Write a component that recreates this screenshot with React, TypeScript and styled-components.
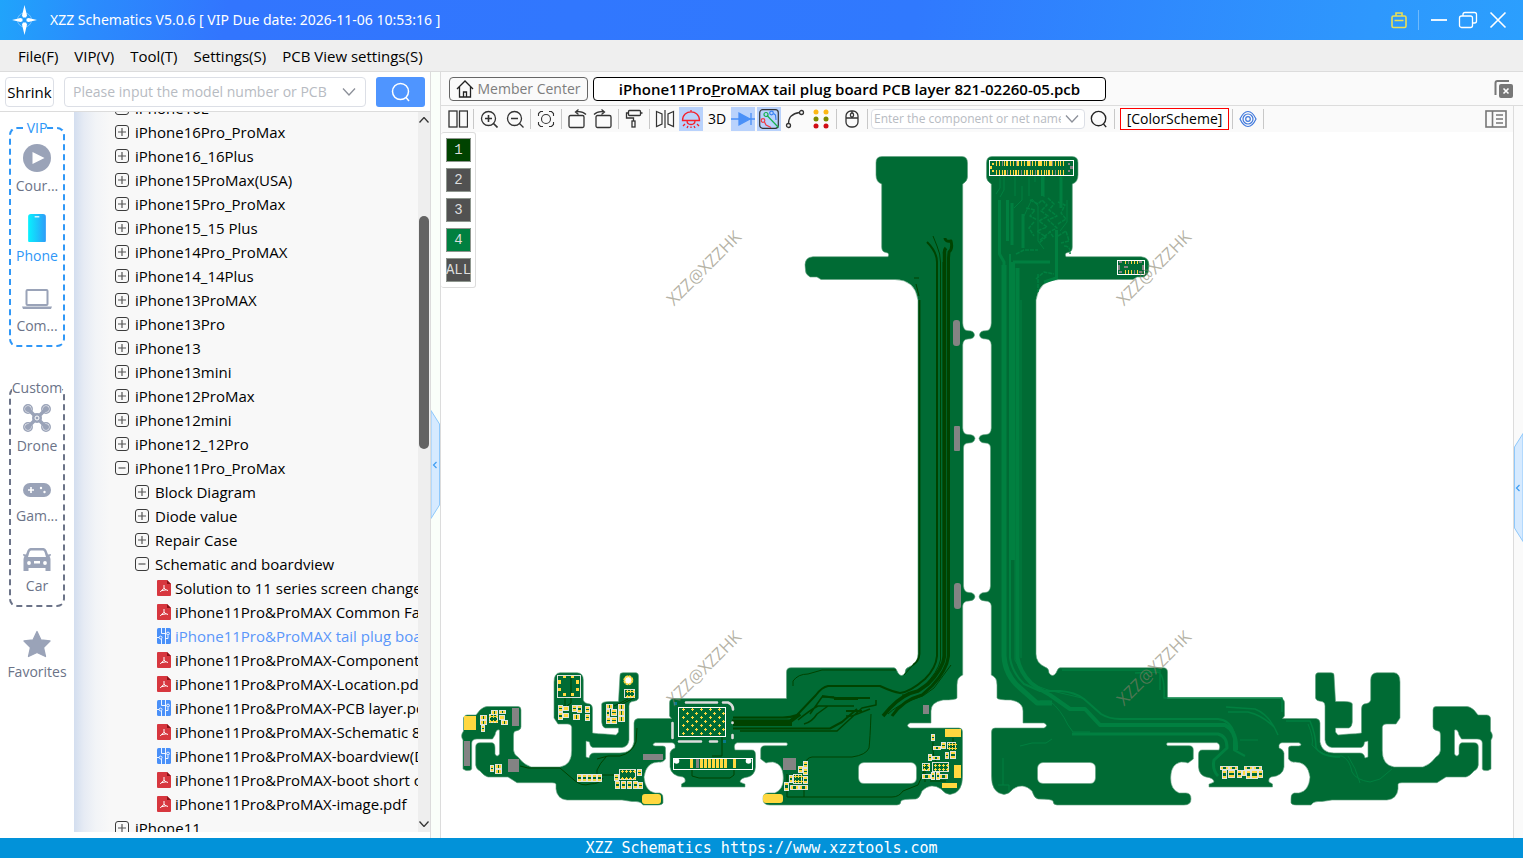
import React from "react";
import styled, { createGlobalStyle } from "styled-components";

const Global = createGlobalStyle`
  *, *::before, *::after { box-sizing: border-box; }
  body { margin: 0; background: #fff; color: #000; font: 15px/20px "Open Sans", "Noto Sans", sans-serif; }
  button, input { font: inherit; color: inherit; }
  button { background: none; border: 0; padding: 0; }
  svg { display: block; flex: none; }
`;

const Page = styled.div`
  display: flex;
  flex-direction: column;
  height: 100vh;
  overflow: hidden;
`;

const TitleBar = styled.header`
  display: flex;
  align-items: center;
  flex: none;
  height: 40px;
  padding: 0 16px 0 12px;
  color: #fff;
  background: linear-gradient(100deg, #20a4fb 0%, #2a8cfd 6%, #3275fe 15%, #3079fe 60%, #2e98fd 90%, #2b9ffe 100%);
`;

const AppTitle = styled.h1`
  flex: 1;
  margin: 0 0 0 13px;
  font-family: "Noto Sans", "Open Sans", sans-serif;
  font-size: 14px;
  font-weight: 400;
  line-height: 20px;
`;

const WindowButtons = styled.div`
  display: flex;
  align-items: center;
  gap: 11px;
`;

const WindowDivider = styled.span`
  width: 1px;
  height: 20px;
  margin-right: 1px;
  background: #6fbafc;
`;

const MenuBar = styled.nav`
  display: flex;
  align-items: center;
  flex: none;
  gap: 16px;
  height: 32px;
  padding: 0 18px;
  background: #efefef;
  border-bottom: 1px solid #dcdcdc;
`;

const MenuItem = styled.button`
  font-size: 15px;
`;

const Workspace = styled.div`
  display: flex;
  flex: 1;
  min-height: 0;
`;

const LeftPane = styled.aside`
  display: flex;
  flex-direction: column;
  flex: none;
  width: 431px;
  border-right: 1px solid #dcdcdc;
`;

const SearchRow = styled.form`
  display: flex;
  align-items: center;
  flex: none;
  height: 40px;
  padding: 0 5px;
  border-bottom: 1px solid #dcdcdc;
`;

const ShrinkButton = styled.button`
  width: 49px;
  height: 30px;
  border: 1px solid #dcdfe6;
  border-radius: 4px;
  font-size: 15px;
`;

const Combo = styled.label<{ $width: number; $height: number; $size: number }>`
  display: flex;
  align-items: center;
  gap: 4px;
  width: ${(p) => p.$width}px;
  height: ${(p) => p.$height}px;
  padding: 0 ${(p) => (p.$size > 13 ? 9 : 5)}px 0 ${(p) => (p.$size > 13 ? 8 : 2)}px;
  border: 1px solid #dcdfe6;
  border-radius: 4px;
  background: #fff;
  color: #a0a4ab;
  font-size: ${(p) => p.$size}px;
`;

const ComboInput = styled.input`
  flex: 1;
  min-width: 0;
  padding: 0;
  border: 0;
  outline: 0;
  background: none;
  &::placeholder { color: #b7bbc2; opacity: 1; }
`;

const SearchButton = styled.button`
  display: grid;
  place-items: center;
  width: 49px;
  height: 30px;
  margin-left: 10px;
  border-radius: 3px;
  background: #4f95ff;
`;

const ComboSlot = styled.div`
  margin-left: 10px;
`;

const Browser = styled.div`
  display: flex;
  flex: 1;
  min-height: 0;
  padding-bottom: 6px;
`;

const Rail = styled.nav`
  display: flex;
  flex-direction: column;
  flex: none;
  width: 74px;
  padding: 6px 9px 0;
`;

const RailGroup = styled.fieldset<{ $tone: string }>`
  display: flex;
  flex-direction: column;
  gap: 18px;
  min-width: 0;
  margin: 0 0 31px;
  padding: 6px 0 9px;
  border: 2px dashed ${(p) => p.$tone};
  border-radius: 8px;
  color: ${(p) => p.$tone};
  & + & { margin-bottom: 23px; }
`;

const RailLegend = styled.legend`
  margin: 0 auto;
  padding: 0;
  font-size: 14px;
  line-height: 20px;
`;

const RailItem = styled.button<{ $active?: boolean }>`
  display: flex;
  flex-direction: column;
  align-items: center;
  gap: 4px;
  height: 52px;
  margin: 0 -8px;
  color: ${(p) => (p.$active ? "#2f97f7" : "#6b7388")};
  font-size: 14px;
  line-height: 20px;
`;

const TreeArea = styled.div`
  flex: 1;
  min-width: 0;
  overflow: hidden;
  background: linear-gradient(90deg, #d3deef 0, #e6ebf4 10px, #f2f4f7 22px, #f8f8f8 36px);
`;

const Tree = styled.ul`
  margin: -16px 0 0;
  padding: 0 0 0 41px;
  list-style: none;
`;

const TreeRow = styled.li<{ $depth: number; $active?: boolean }>`
  display: flex;
  align-items: center;
  height: 24px;
  padding-left: ${(p) => p.$depth * 20 + (p.$depth === 2 ? 2 : 0)}px;
  gap: ${(p) => (p.$depth === 2 ? 4 : 6)}px;
  color: ${(p) => (p.$active ? "#5a96fa" : "#000")};
  font-size: 15px;
  white-space: nowrap;
`;

const Scrollbar = styled.div`
  display: flex;
  flex-direction: column;
  align-items: center;
  flex: none;
  width: 12px;
  background: #eee;
`;

const ScrollStep = styled.button`
  display: grid;
  place-items: center;
  width: 12px;
  height: 16px;
`;

const ScrollTrack = styled.div`
  flex: 1;
  padding-top: 88px;
`;

const ScrollThumb = styled.div`
  width: 10px;
  height: 233px;
  border-radius: 5px;
  background: #636363;
`;

const Splitter = styled.div<{ $shift: number; $tone: string }>`
  display: flex;
  align-items: center;
  flex: none;
  width: 9px;
  padding-top: ${(p) => p.$shift}px;
  background: ${(p) => p.$tone};
`;

const RightPane = styled.main`
  display: flex;
  flex-direction: column;
  flex: 1;
  min-width: 0;
  border-left: 1px solid #dcdcdc;
`;

const TabBar = styled.div`
  display: flex;
  align-items: center;
  flex: none;
  gap: 5px;
  height: 34px;
  padding: 0 10px 0 8px;
  background: #fafafa;
  border-bottom: 1px solid #dcdcdc;
`;

const Tab = styled.button<{ $current?: boolean }>`
  display: flex;
  align-items: center;
  justify-content: center;
  gap: 3px;
  width: ${(p) => (p.$current ? 513 : 139)}px;
  height: 24px;
  border: 1px solid ${(p) => (p.$current ? "#000" : "#666")};
  border-radius: 4px;
  background: ${(p) => (p.$current ? "#fff" : "#fafafa")};
  color: ${(p) => (p.$current ? "#000" : "#7d7d7d")};
  font-size: ${(p) => (p.$current ? 15 : 14)}px;
  font-weight: ${(p) => (p.$current ? 600 : 400)};
  white-space: nowrap;
`;

const Spacer = styled.span`
  flex: 1;
`;

const Viewer = styled.div`
  display: flex;
  flex: 1;
  min-height: 0;
`;

const BoardColumn = styled.section`
  display: flex;
  flex-direction: column;
  flex: 1;
  min-width: 0;
  border-right: 1px solid #dcdcdc;
`;

const ToolBar = styled.div`
  display: flex;
  align-items: center;
  flex: none;
  gap: 2px;
  height: 26px;
  padding: 0 5px;
  background: #fafafa;
`;

const Tool = styled.button<{ $on?: boolean }>`
  display: grid;
  place-items: center;
  flex: none;
  width: 24px;
  height: 24px;
  background: ${(p) => (p.$on ? "#b9d2fc" : "none")};
  font-size: 14px;
`;

const ToolDivider = styled.span`
  width: 1px;
  height: 20px;
  margin: 0 1px;
  background: #c8c8c8;
`;

const SchemeButton = styled.button`
  width: 109px;
  height: 22px;
  margin: 0 0 0 2px;
  border: 1px solid #f00;
  background: #fff;
  font-size: 14px;
  line-height: 18px;
`;

const Canvas = styled.div`
  position: relative;
  flex: 1;
  min-height: 0;
`;

const Board = styled.svg`
  width: 100%;
  height: 100%;
`;

const LayerPalette = styled.div`
  position: absolute;
  top: 0;
  left: 0;
  display: flex;
  flex-direction: column;
  gap: 6px;
  width: 35px;
  padding: 5px;
  border: 1px solid #dcdcdc;
  border-left: 0;
  border-radius: 3px;
  background: #fff;
`;

const LayerButton = styled.button<{ $fill: string }>`
  display: flex;
  align-items: center;
  justify-content: center;
  width: 25px;
  height: 24px;
  box-shadow: inset 0 0 0 1px #8e968e;
  border-radius: 1px;
  background: ${(p) => p.$fill};
  color: #ddd;
  font: 14px/20px "Liberation Mono", monospace;
`;

const StatusBar = styled.footer`
  flex: none;
  height: 20px;
  background: #0292d9;
  color: #fff;
  font: 15px/20px "DejaVu Sans Mono", monospace;
  text-align: center;
`;

const StatusLink = styled.a`
  color: inherit;
  text-decoration: none;
`;

type IconProps = { w?: number; h?: number; box?: string; color?: string; stroke?: number; children: React.ReactNode };

const Icon = ({ w = 20, h = 20, box, color = "#333", stroke = 1.3, children }: IconProps) => (
  <svg width={w} height={h} viewBox={box ?? `0 0 ${w} ${h}`} fill="none" stroke={color} strokeWidth={stroke} aria-hidden="true">
    {children}
  </svg>
);

const Chevron = () => (
  <Icon w={14} h={10} color="#8c9099"><path d="M1 1.5 7 8l6-6.5" /></Icon>
);

const Expander = ({ open }: { open?: boolean }) => (
  <Icon w={14} h={14} color="#3b3b3b" stroke={1}>
    <rect x=".5" y=".5" width="13" height="13" rx="2.5" />
    <path d={open ? "M3.5 7h7" : "M3 7h8M7 3v8"} stroke="#555" strokeWidth="1.2" />
  </Icon>
);

const PdfIcon = () => (
  <Icon w={14} h={16} color="#fff" stroke={1}>
    <path d="M1 0h9l4 4v11a1 1 0 0 1-1 1H1a1 1 0 0 1-1-1V1a1 1 0 0 1 1-1Z" fill="#d7373f" stroke="none" />
    <path d="M10 0v4h4Z" fill="#8c1218" stroke="none" />
    <path d="M7 5v3.200L3.200 12M7 8.200q1.500 1.800 4 2.300M4.600 10.600 9 9.800" />
  </Icon>
);

const PcbIcon = () => (
  <Icon w={14} h={16} color="#fff" stroke={0.9}>
    <rect width="14" height="16" rx="1.5" fill="#4a90f8" stroke="none" />
    <path d="M4.500 0v5.500H8.500M8.500 0V16M4.500 16V11M0 9.500h2M8.500 10.500H11V7.500" />
    <circle cx="11" cy="5.500" r="1.400" fill="#4a90f8" /><circle cx="3.600" cy="9.500" r="1.400" fill="#4a90f8" />
  </Icon>
);

type Node = { label: string; depth?: number; kind?: "open" | "pdf" | "pcb"; active?: boolean };

const nodes: Node[] = [
  { label: "iPhone16E" },
  { label: "iPhone16Pro_ProMax" },
  { label: "iPhone16_16Plus" },
  { label: "iPhone15ProMax(USA)" },
  { label: "iPhone15Pro_ProMax" },
  { label: "iPhone15_15 Plus" },
  { label: "iPhone14Pro_ProMAX" },
  { label: "iPhone14_14Plus" },
  { label: "iPhone13ProMAX" },
  { label: "iPhone13Pro" },
  { label: "iPhone13" },
  { label: "iPhone13mini" },
  { label: "iPhone12ProMax" },
  { label: "iPhone12mini" },
  { label: "iPhone12_12Pro" },
  { label: "iPhone11Pro_ProMax", kind: "open" },
  { label: "Block Diagram", depth: 1 },
  { label: "Diode value", depth: 1 },
  { label: "Repair Case", depth: 1 },
  { label: "Schematic and boardview", depth: 1, kind: "open" },
  { label: "Solution to 11 series screen change problem.pdf", depth: 2, kind: "pdf" },
  { label: "iPhone11Pro&ProMAX Common Faults.pdf", depth: 2, kind: "pdf" },
  { label: "iPhone11Pro&ProMAX tail plug board PCB layer", depth: 2, kind: "pcb", active: true },
  { label: "iPhone11Pro&ProMAX-Component value.pdf", depth: 2, kind: "pdf" },
  { label: "iPhone11Pro&ProMAX-Location.pdf", depth: 2, kind: "pdf" },
  { label: "iPhone11Pro&ProMAX-PCB layer.pcb", depth: 2, kind: "pcb" },
  { label: "iPhone11Pro&ProMAX-Schematic 820.pdf", depth: 2, kind: "pdf" },
  { label: "iPhone11Pro&ProMAX-boardview(Diode).pcb", depth: 2, kind: "pcb" },
  { label: "iPhone11Pro&ProMAX-boot short circuit.pdf", depth: 2, kind: "pdf" },
  { label: "iPhone11Pro&ProMAX-image.pdf", depth: 2, kind: "pdf" },
  { label: "iPhone11" },
];

const muted = "#9aa3b8";

const CourseIcon = () => (
  <Icon w={28} h={28}><circle cx="14" cy="14" r="14" fill={muted} stroke="none" /><path d="M9.500 8v12l12-6Z" fill="#fff" stroke="none" /></Icon>
);
const PhoneIcon = () => (
  <Icon w={28} h={28} box="0 -1 28 30">
    <defs><linearGradient id="phone"><stop stopColor="#08f1fe" /><stop offset="1" stopColor="#2e9cf8" /></linearGradient></defs>
    <rect x="4.500" y="-1" width="19" height="31" rx="3" fill="url(#phone)" stroke="none" /><path d="M11.500 2h5" stroke="#fff" />
  </Icon>
);
const ComputerIcon = () => (
  <Icon w={30} h={28} color={muted} stroke={2}><rect x="4.500" y="6" width="21" height="15" rx="1" /><path d="M0 22.500h30l-1 2.500H1Z" fill={muted} stroke="none" /></Icon>
);
const DroneIcon = () => (
  <Icon w={28} h={28} color={muted} stroke={3.5}>
    <path d="m6 6 16 16M22 6 6 22" />
    {[[5, 5], [23, 5], [5, 23], [23, 23]].map(([x, y]) => (
      <React.Fragment key={`${x}-${y}`}>
        <circle cx={x} cy={y} r="4.200" strokeWidth="1.500" />
        <circle cx={x} cy={y} r="3" fill={muted} stroke="none" />
      </React.Fragment>
    ))}
    <circle cx="14" cy="14" r="5" fill={muted} stroke="none" /><circle cx="14" cy="14" r="2" stroke="#fff" strokeWidth="1" />
  </Icon>
);
const GameIcon = () => (
  <Icon w={28} h={28}>
    <rect y="9" width="28" height="14" rx="7" fill={muted} stroke="none" />
    <path d="M5 16h6M8 13v6" stroke="#fff" strokeWidth="1.600" /><circle cx="18" cy="14" r="1.200" fill="#fff" stroke="none" /><circle cx="21.500" cy="18" r="1.200" fill="#fff" stroke="none" />
  </Icon>
);
const CarIcon = () => (
  <Icon w={28} h={28}>
    <path d="M7.500 4h13q2 0 3 2.500l1.500 4 3-.500-.500 2-1 .500q1 1 1 3V27h-5v-3h-17v3h-5V15.500q0-2 1-3l-1-.500L0 10l3 .500 1.500-4Q5.500 4 7.500 4Z" fill={muted} stroke="none" />
    <path d="M8 6.500h12q1 0 1.500 1.500l1.500 5H5l1.500-5Q7 6.500 8 6.500Z" fill="#fff" stroke="none" />
    <g fill="#fff" stroke="none"><circle cx="6" cy="19" r="1.900" /><circle cx="22" cy="19" r="1.900" /><path d="M11 17h6v2.500h-6Z" /></g>
  </Icon>
);
const StarIcon = () => (
  <Icon w={28} h={28} color={muted}><path d="m14 1.500 4 8.500 9 1-6.500 6.500L22.500 26.500 14 22.500l-8.500 4 2-9L1 11l9-1Z" fill={muted} strokeLinejoin="round" /></Icon>
);

const SearchGlyph = ({ color, size = 20 }: { color: string; size?: number }) => (
  <Icon w={size} h={size} box="0 0 20 20" color={color} stroke={1.5}><circle cx="9.500" cy="9.500" r="8" /><path d="m15 15.500 3 3.500" /></Icon>
);

const DividerBar = () => <ToolDivider aria-hidden="true" />;

const toolGroups: [string, boolean, React.ReactNode][][] = [
  [["Split view", false, <Icon w={20} h={18}><rect x="1" y="1" width="8" height="16" /><rect x="11.500" y="1" width="8" height="16" /></Icon>]],
  [
    ["Zoom in", false, <Icon w={18} h={18}><circle cx="8.500" cy="8.500" r="7" /><path d="m13.500 13.500 4 4M5 8.500h7M8.500 5v7" strokeWidth="1.600" /></Icon>],
    ["Zoom out", false, <Icon w={18} h={18}><circle cx="8.500" cy="8.500" r="7" /><path d="m13.500 13.500 4 4M5 8.500h7" /></Icon>],
  ],
  [["Fit", false, <Icon w={18} h={18} stroke={1.1}><circle cx="9" cy="9" r="4.500" /><path d="M1.500 6V3.500l2-2H6M12 1.500h2.500l2 2V6M16.500 12v2.500l-2 2H12M6 16.500H3.500l-2-2V12" /></Icon>]],
  [
    ["Rotate left", false, <Icon w={20} h={20}><rect x="2" y="6.500" width="15" height="12" rx="1.500" /><path d="M19 5.500q-4-4-10.500-2.500M11.500 .500 8.500 3l3 2.500" /></Icon>],
    ["Rotate right", false, <Icon w={20} h={20}><rect x="3" y="6.500" width="15" height="12" rx="1.500" /><path d="M1 5.500q4-4 10.500-2.500M8.500 .500l3 2.500-3 2.500" /></Icon>],
  ],
  [["Format", false, <Icon w={18} h={20}><rect x="3.500" y="1.500" width="12" height="5" rx="1" /><path d="M3.500 4H1.500v5h7v3M15.500 4h2" /><rect x="7" y="12" width="3" height="6" /></Icon>]],
  [
    ["Mirror", false, <Icon w={20} h={18} stroke={1.2}><path d="M1.500 1.500 7 4v10l-5.500 2.500ZM10 0v18M18.500 1.500 13 4v10l5.500 2.500Z" /></Icon>],
    ["Lamp", true, <Icon w={20} h={20} color="#f5202c"><path d="M10 1v2M1.500 11.500C1.500 0 18.500 0 18.500 11.500ZM6 11.500q0 4 4 4t4-4M4 15l-2 2M16 15l2 2M7 17l-1 2M13 17l1 2M10 17.500V19" /></Icon>],
    ["3D view", false, "3D"],
    ["Diode", true, <Icon w={24} h={16} color="#4a90f8"><path d="M0 8h24M20 2v12" /><path d="M8 2v12l11-6Z" fill="#4a90f8" /></Icon>],
    ["Nets", true, <Icon w={20} h={20} stroke={1.2}><rect x=".700" y=".700" width="18.600" height="18.600" rx="3" /><circle cx="7" cy="5.500" r="2" stroke="#16b04a" /><path d="m8.500 7 11 11.500" stroke="#16b04a" /><circle cx="4" cy="11.500" r="1.800" stroke="#ef3b43" /><path d="m5.500 13 1.500 3 5 2.500" stroke="#ef3b43" /><circle cx="12.500" cy="4" r="1.800" stroke="#3880f2" /><path d="m14.500 4.500 2 1.500.500 5" stroke="#3880f2" /></Icon>],
    ["Curve", false, <Icon w={20} h={20}><circle cx="3.500" cy="16.500" r="2" /><circle cx="16.500" cy="3.500" r="2" /><path d="M3.500 14.500Q3.500 5 14.500 3.500" /></Icon>],
    ["Points", false, <Icon w={18} h={20}>{["#fdb713", "#7c8a00", "#d00c14"].map((c, i) => <g key={c} fill={c} stroke="none"><circle cx="4" cy={3 + i * 7} r="2.500" /><circle cx="14" cy={3 + i * 7} r="2.500" /></g>)}</Icon>],
  ],
  [["Mouse", false, <Icon w={14} h={18}><rect x="1" y="1" width="12" height="16" rx="5" /><path d="M1 8h12M7 1v2M7 7v1" /><rect x="5.500" y="3" width="3" height="4" rx="1.500" /></Icon>]],
];

const GREEN = "#006b34";
const DARK = "#004300";
const LIGHT = "#008040";
const GOLD = "#ffd83f";
const GREY = "#838383";
const SILK = "#dfe3dc";

const outline =
  "M876 163Q875.800 156.500 882 156.500H962Q967.500 156.500 967.500 163V177Q967.500 181 962.700 184V323Q963 330.700 968 330.700Q974 330.500 974.500 335Q974 339 968 339Q963 339 962.700 345V428Q963 434.500 968 434.500Q974.500 434.500 975 438.500Q974 443 969 443Q963.500 443 963.500 448V586Q964 592.500 969 592.500Q974.500 592.500 975 597Q974 601 969 601Q963 601 962.700 606V675Q957 677 957 685V698Q956 700 943 700Q931 702 931 711V723H910Q905 725.500 910 728H959Q962.500 728 962.500 732V775Q963 793 950 794.500Q945 794 941 789Q931 782 922 791Q920 798 916 799Q902 799 901 801Q901 805 897 805H770Q763 805 763 799Q763 793 768 793H775Q784 789 783.300 777Q783 764 773 762Q768 762 766 763L760.700 759V750Q760.700 745.700 765 745.700H786.500Q788.500 744 786.500 742.700H737Q733 744 735 750H752Q755.500 750 755.500 755V767Q755 775 748 777Q740 778 740 782Q744 784 745 784V787H681.500V784L685 782Q686 778 683 777Q671 776 670 767V753Q671 749 675 748V745Q674 742.700 672 742.700H655Q651 745 655 746H663Q666 746 665.500 749V759Q663 763 659 762Q646 762 644 777Q645 791 655 793H660Q663.500 794 663 799V803Q662 805 658 805H643Q641 801.500 636 801.500H632L622 800H567Q557 799 556 789V784Q555 782.700 552 782.700H517L508 777H488Q484 776 480 771Q476 769 475.700 765V747Q475.700 742.700 480 742.700H492Q495 743 495 748V754Q497 758 499.500 754V730Q496 729 495 735L492.500 739H477Q472 739 471.700 743V769Q471 771 466 770.500L463 769V740Q460 736 463.500 731V720Q463 715.500 467 715H476L480 710Q484 706.500 487 706.500H518Q521 706.500 521 710V727Q521 730 516 731Q513.500 731 513.500 736V750Q514 755 518 757Q524 765 531 767H560Q572 765 571.700 750V727Q571 723.500 566 724H558L554 718V682Q554 673 560 672.700H577Q583.300 673 583.300 680V700Q584 703.500 590 704Q592.500 705 592.500 709V733Q598 734 605 734L616 735L618.500 732V728H605Q602 727 601.700 722V704Q602 701.500 610 701.500H618.500L620 675Q620 672.700 623 672.700H636Q638.500 673 638.500 676V698Q638 701 632 701.500Q629 702 629 706V740Q628 747 622 747.500H593Q590 747 589.500 742L586 741V757L589 758Q590 753 594 753H620Q632 753 634 742V723Q634 719 638 718.500H671.500L669.500 716V703Q669.500 698.500 674 698.500H786.500V672Q786.500 667.700 791 667.700H894Q896 667.700 898 673Q901.500 678 905 673Q905 668 909 667Q918 663 918 654V300Q915 279.500 895 279.500H821L817 277H810Q805 274 805.500 270Q803 257 813 256.700H888Q890 253 886 252.500Q881.700 252 881.700 247V184Q876 182 876 175ZM864 762.500Q858.500 763 858.500 768V778Q859 783.500 864 783.500H911Q916.500 783 916.500 778V768Q916 763 911 762.500Z";

const darkTraces: [number, string][] = [
  [1.8, "M919.500 300V654Q919 661 913 665"],
  [1, "M913 665L904 675M896 670H822L808 674Q798 674 793 681V686"],
  [2, "M927 242Q937 252 937 262V656Q936 668 925 679Q910 692 900 693Q893 692 880 686H828Q822 687 816 695L797 715Q790 718 780 717.500H733"],
  [1, "M933 236L937 246Q940.500 254 940.500 262V660Q938 672 924 686Q912 696 902 695"],
  [3.5, "M946 248Q944 250 944.500 254V656Q943 669 928 684L918 691Q903 694 890 708L883 716"],
  [3, "M945 238Q945 242 951 241Q953 249 949 252L948.500 258V656Q947 670 932 686L922 695Q903 700 892 716"],
  [1, "M914 278H919M916 284L919 296M943 262V660M951 665L934 688Q924 697 912 700Q896 706 888 714"],
  [4, "M732 721.500H790L800 714M733 724H792"],
  [2, "M733 728.500H830L842 722L857 709"],
  [1.5, "M740 731H837L862 708L876 705V700M804 724Q812 722 817 714L828 706M798 720Q810 710 818 706H854M810 714L822 697H834M846 716H852L870 709"],
  [2, "M822 696L836 698H870M846 711H862M834 699H858"],
  [1, "M871 714Q870 740 869 748Q866 755 852 757H812Q806 758 806 763M787 797H892Q899 797 903 791L918 785Q922 777 925 768"],
  [1, "M637 728L636 742Q632 753 620 756H608L597 759M606 757Q600 763 597 770V780M520 766L528 768H560L574 780Q582 787 590 784Q600 784 603 778M597 775H615M565 697V708M571 678V703L567 706"],
  [1, "M618 706L634 698M614 706L628 699M722 737V756H712M692 769V776L699 778H730L734 775V770M787 774V797M804 790V797M933 742Q932 760 938 764M953 738V758M930 781H946M925 764V782"],
];

const lightTraces: [number, string][] = [
  [5, "M1004 265V656Q1005 675 1020 688L1037 703H1052"],
  [2, "M1010 254V658Q1012 672 1024 684L1040 691H1060Q1075 692 1084 699L1101 714Q1109 719 1120 719H1218Q1230 720 1234 733V750L1245 756"],
  [4, "M1013 262V560M1017.500 268V658Q1020 672 1031 683Q1040 690 1050 695L1070 709H1085L1100 725H1225Q1237 731 1236 750"],
  [1, "M1021 300V658M1015 440V660Q1026 685 1048 690L1082 698M1040 701H1050Q1061 710 1068 725L1073 732H1090"],
  [3, "M1072 734H1218Q1227 736 1227 748L1214 760Q1212 770 1218 776"],
  [1.5, "M1062 670H1160V690M1135 673L1158 672Q1165 675 1164 698H1282V712M1226 707L1255 709Q1270 715 1278 735M1228 712H1248Q1262 715 1274 727M1286 721H1310Q1316 735 1316 748Q1322 757 1340 757"],
  [1, "M1308 724Q1314 738 1312 745Q1323 758 1342 756Q1350 760 1352 772Q1356 780 1370 782L1380 779L1392 769M1348 756Q1356 768 1360 783M1240 740H1258M1020 746L1032 743H1046L1052 739M1003 758V785M998 785H1009V792"],
  [1, "M1000 176V188L996 194M1004 176V190L1000 197M1015 176V196M1022 186V200L1014 208M1029 176V196M1044 176V197M1061 176V208M1067 200V222L1060 231M1035 176V182M1024 216L1032 199L1038 206V241L1044 249"],
  [3, "M999.500 200V254L1004 262V290M1007.500 200V241M1012 203V245M1023 214V248M1042.500 176V196M1061 177V208M1056.500 230V278L1044 282M1013 262H1050"],
];

const chips: [number, number, number, number][] = [
  [480, 715, 6, 4], [480, 720, 6, 4], [481, 725, 3, 6], [491, 710, 6, 4], [499, 710, 6, 3], [499, 715, 5, 4], [501, 720, 6, 4], [490, 765, 3, 6], [495, 764, 6, 4], [495, 769, 6, 4],
  [558, 705, 4, 6], [558, 712, 4, 7], [563, 706, 5, 4], [563, 713, 5, 4], [572, 705, 4, 6], [577, 705, 4, 7], [573, 714, 6, 5], [585, 706, 4, 6], [585, 714, 4, 6],
  [606, 704, 6, 4], [606, 709, 3, 7], [606, 717, 4, 6], [611, 709, 5, 6], [611, 717, 5, 6], [618, 704, 6, 5], [618, 710, 6, 5], [618, 716, 6, 5],
  [577, 774, 4, 7], [582, 774, 4, 7], [587, 774, 4, 7], [592, 774, 4, 7], [597, 774, 4, 7],
  [614, 774, 4, 6], [615, 781, 4, 7], [621, 781, 4, 7], [627, 781, 4, 7], [633, 781, 4, 7], [638, 782, 4, 6], [637, 769, 4, 6],
  [784, 782, 4, 8], [790, 785, 8, 4], [799, 785, 8, 4], [803, 761, 4, 6], [803, 768, 4, 6], [798, 766, 4, 6], [803, 776, 4, 7], [789, 775, 3, 7],
  [931, 734, 3, 6], [933, 746, 7, 3], [941, 742, 4, 6], [928, 754, 3, 6], [932, 756, 7, 3], [945, 752, 3, 6], [950, 751, 5, 7], [922, 774, 8, 4], [931, 772, 3, 7], [936, 772, 3, 7], [939, 774, 8, 4],
  [1222, 770, 4, 8], [1228, 770, 6, 7], [1237, 770, 4, 7], [1242, 770, 3, 5], [1246, 770, 4, 8], [1251, 770, 6, 8], [1258, 770, 4, 7], [1220, 766, 8, 3], [1229, 766, 8, 3], [1244, 766, 8, 3], [1253, 766, 8, 3],
];

const Chip = ({ spec: [x, y, w, h] }: { spec: [number, number, number, number] }) => {
  const upright = h > w;
  return (
    <g>
      <rect x={x} y={y} width={w + 1} height={h + 1} fill={GREEN} />
      <rect x={x} y={y} width={upright ? w : 3} height={upright ? 3 : h} fill={GOLD} />
      <rect x={upright ? x : x + w - 2} y={upright ? y + h - 2 : y} width={upright ? w : 3} height={upright ? 3 : h} fill={GOLD} />
      <rect x={x + 0.5} y={y + 0.5} width={w} height={h} fill="none" stroke={SILK} strokeWidth="1" />
    </g>
  );
};

const GridArray = ({ x, y, cols, rows, dx, dy, stagger }: { x: number; y: number; cols: number; rows: number; dx: number; dy: number; stagger?: boolean }) => (
  <path
    d={Array.from({ length: rows * cols }, (_, i) => {
      const r = Math.floor(i / cols);
      const cx = x + (i % cols) * dx + (stagger && r % 2 ? dx / 2 : 0);
      const cy = y + r * dy;
      return `M${cx - 1.5} ${cy}h3M${cx} ${cy - 1.5}v3`;
    }).join("")}
    stroke={GOLD}
    strokeWidth="1"
    fill="none"
  />
);

const Bars = ({ x, y, count, step, w, h, skip = [] }: { x: number; y: number; count: number; step: number; w: number; h: number; skip?: number[] }) => (
  <>
    {Array.from({ length: count }, (_, i) => (
      <rect key={i} x={x + i * step} y={y} width={w} height={h} fill={skip.includes(i) ? GREY : GOLD} />
    ))}
  </>
);

const watermarks = [[704, 268], [1154, 268], [704, 668], [1154, 668]];

const BoardDrawing = () => (
  <Board viewBox="441 132 1072 706" role="img" aria-label="PCB layer view">
    <g fill={GREEN} fillRule="evenodd" stroke="#5f9f7d" strokeWidth=".6">
      <path d={outline} />
      <path d={outline} transform="matrix(-1 0 0 1 1954 0)" />
    </g>
    <g fill="none" strokeLinejoin="round">
      {darkTraces.map(([w, d]) => <path key={d} d={d} stroke={DARK} strokeWidth={w} />)}
      {lightTraces.map(([w, d]) => <path key={d} d={d} stroke={LIGHT} strokeWidth={w} />)}
      <path
        d="M1030 200l8 4 4-4 5 5-6 6 7 5-9 5 8 6-10 4 9 6-7 6M1048 198l6 6-5 6 8 6-9 4 9 8-8 4M1058 202l7 3-4 8 5 6-8 5M1026 208l9 2-5 6 7 4M1034 222l-5 6 5 8M1040 240l10-8 4 6M1058 236l8-5 3 10-8 2M1064 246q7 0 6 8M1016 254l8-4h14M1036 279l8-7 10 2M1038 274v18"
        stroke={LIGHT} strokeWidth="1.5" strokeDasharray="4 1"
      />
    </g>
    <g shapeRendering="crispEdges">
      <g fill={GREY}>
        <rect x="512" y="708" width="7" height="18" /><rect x="464" y="741" width="6" height="25" /><rect x="508" y="759" width="11" height="13" />
        <rect x="643" y="754" width="20" height="6" rx="1" /><rect x="783" y="758" width="13" height="12" /><rect x="923" y="705" width="6" height="9" />
      </g>
      <g fill={GOLD}>
        <rect x="464" y="716" width="12" height="14" /><rect x="945" y="729" width="16" height="8" /><rect x="954" y="765" width="7" height="13" /><rect x="942" y="783" width="15" height="5" />
      </g>
      {chips.map((c) => <Chip key={c.join()} spec={c} />)}
      <g fill="none" stroke={SILK}>
        <rect x="557.500" y="675.500" width="23" height="22" /><rect x="678.500" y="707.500" width="47" height="29" stroke="#fff" />
        <rect x="673.500" y="758.500" width="79" height="11" stroke="#fff" /><rect x="624.500" y="689.500" width="10" height="8" />
        <rect x="619.500" y="769.500" width="16" height="10" /><rect x="793.500" y="774.500" width="8" height="9" />
        <rect x="932.500" y="762.500" width="16" height="9" /><rect x="922.500" y="763.500" width="7" height="7" /><rect x="947.500" y="742.500" width="8" height="6" />
        <rect x="489.500" y="714.500" width="8" height="8" />
        <rect x="989.500" y="160.500" width="84" height="15" stroke="#fff" /><rect x="1117.500" y="260.500" width="27" height="14" stroke="#fff" />
      </g>
      <GridArray x={683} y={709} cols={5} rows={7} dx={9} dy={4} stagger />
      <GridArray x={622} y={771} cols={4} rows={2} dx={4} dy={7} />
      <GridArray x={935} y={765} cols={4} rows={2} dx={4} dy={4} />
      <GridArray x={924} y={765} cols={2} rows={2} dx={4} dy={4} />
      <GridArray x={627} y={691} cols={3} rows={2} dx={3} dy={5} />
      <GridArray x={949} y={744} cols={3} rows={2} dx={3} dy={4} />
      <GridArray x={795} y={776} cols={3} rows={2} dx={3} dy={5} />
      <GridArray x={490} y={716} cols={3} rows={2} dx={3} dy={5} />
      <g fill={GOLD}>
        <rect x="563" y="676" width="3" height="2" /><rect x="571" y="676" width="3" height="2" /><rect x="563" y="693" width="3" height="3" /><rect x="571" y="693" width="3" height="3" />
        <rect x="558" y="680" width="3" height="4" /><rect x="558" y="688" width="3" height="3" /><rect x="576" y="680" width="3" height="4" /><rect x="576" y="688" width="3" height="3" />
      </g>
      <Bars x={690} y={759} count={1} step={4} w={3} h={9} />
      <Bars x={696} y={759} count={8} step={4} w={3} h={9} skip={[0]} />
      <Bars x={733} y={759} count={1} step={4} w={3} h={9} />
      <Bars x={996} y={161} count={25} step={2.8} w={1} h={5} skip={[2, 7, 12, 20]} />
      <Bars x={1006} y={161} count={5} step={11} w={2} h={5} />
      <Bars x={996} y={170} count={25} step={2.8} w={1} h={5} skip={[3, 4, 9, 14, 21]} />
      <Bars x={1004} y={170} count={5} step={11} w={2} h={5} />
      <Bars x={1125} y={261} count={5} step={3} w={1} h={3} skip={[1]} />
      <Bars x={1125} y={270} count={5} step={3} w={1} h={4} skip={[3]} />
      <g fill={GREY}>
        <rect x="1118" y="265" width="2" height="5" /><rect x="1142" y="265" width="2" height="5" /><rect x="1124" y="266" width="4" height="2" /><rect x="1119" y="271" width="3" height="2" /><rect x="1119" y="261" width="3" height="2" /><rect x="1139" y="261" width="3" height="2" /><rect x="1139" y="271" width="3" height="2" />
        <rect x="1070" y="166" width="3" height="3" /><rect x="1068" y="163" width="2" height="2" /><rect x="1068" y="170" width="2" height="2" />
      </g>
      <g fill={GOLD}><rect x="990" y="166" width="2" height="3" /><rect x="992" y="163" width="2" height="2" /><rect x="992" y="170" width="2" height="2" /></g>
      <g fill="#087b8d"><rect x="674" y="702" width="3" height="3" /><rect x="723" y="740" width="3" height="3" /></g>
    </g>
    <g fill={GREY}>
      <rect x="953" y="320" width="7" height="26" rx="3" /><rect x="954" y="426" width="6" height="25" rx="1" /><rect x="954" y="583" width="7" height="26" rx="3" />
    </g>
    <g fill={GOLD}><rect x="642" y="794" width="19" height="10" rx="3" /><rect x="763" y="794" width="20" height="9" rx="3" /></g>
    <g stroke="#dcdcdc" strokeWidth="2.600" strokeLinecap="round" fill="none">
      <path d="M686 702.500h31M723 702.500h5q5 2 5 7M672.500 723v15M679 741.500h22M710 741.500h7M732.500 735v3M732.500 722.500v.500" />
    </g>
    <circle cx="628.300" cy="680.300" r="4" fill="#fff" stroke={GOLD} strokeWidth="2" strokeDasharray="2.500 .600" />
    <g fill="#fff"><circle cx="676.500" cy="761" r="2.800" /><circle cx="748.500" cy="761" r="2.800" /></g>
    <g fill="#85806a" fillOpacity=".6" fontFamily="Open Sans, sans-serif" fontSize="17" textAnchor="middle">
      {watermarks.map(([x, y]) => (
        <text key={`${x}-${y}`} x={x} y={y} dy="6" transform={`rotate(-45 ${x} ${y})`}>XZZ@XZZHK</text>
      ))}
    </g>
  </Board>
);

const Handle = ({ side }: { side: "left" | "right" }) => (
  <button type="button" aria-label={`Toggle ${side} panel`}>
    <Icon w={9} h={109} color="#8ec8fb" stroke={1}>
      <path d={side === "left" ? "M0 .500 8.500 14v81L0 108.500Z" : "M9 .500.500 14v81L9 108.500Z"} fill="#d6eaff" />
      <path d="M5.500 52 2.500 55l3 3" stroke="#3f9df2" strokeWidth="1.200" />
    </Icon>
  </button>
);

const layers: [string, string][] = [["1", "#004300"], ["2", "#515151"], ["3", "#515151"], ["4", "#008040"], ["ALL", "#515151"]];

export default function App() {
  return (
    <Page>
      <Global />
      <TitleBar>
        <Icon w={25} h={30} color="#fff" stroke={1}>
          <circle cx="12.500" cy="15" r="7" opacity=".35" />
          <path d="M12.500 0 15 10.500 14 12.500h-3l-1-2ZM12.500 30 15 19.500l-1-2h-3l-1 2ZM0 15l8.500-2 2 .700v2.600l-2 .700ZM25 15l-8.500-2-2 .700v2.600l2 .700Z" fill="#fff" stroke="none" />
        </Icon>
        <AppTitle>XZZ Schematics V5.0.6 [ VIP Due date: 2026-11-06 10:53:16 ]</AppTitle>
        <WindowButtons>
          <button type="button" aria-label="Toolbox"><Icon w={16} h={18} color="#eadf55" stroke={1.6}><rect x="1" y="5" width="14" height="11.500" rx="1.500" /><path d="M5 5V2h6v3M3.500 9.500h9" /></Icon></button>
          <WindowDivider />
          <button type="button" aria-label="Minimize"><Icon w={16} h={18} color="#fff" stroke={1.8}><path d="M0 9h16" /></Icon></button>
          <button type="button" aria-label="Restore"><Icon w={20} h={18} color="#fff"><rect x="1.500" y="5" width="13" height="11.500" rx="2" /><path d="M5 5V3.500Q5 1.500 7 1.500h9.500q2 0 2 2V10q0 2-2 2h-2" /></Icon></button>
          <button type="button" aria-label="Close"><Icon w={18} h={18} color="#fff" stroke={1.6}><path d="m1.500 1.500 15 15M16.500 1.500l-15 15" /></Icon></button>
        </WindowButtons>
      </TitleBar>
      <MenuBar>
        {["File(F)", "VIP(V)", "Tool(T)", "Settings(S)", "PCB View settings(S)"].map((m) => <MenuItem key={m} type="button">{m}</MenuItem>)}
      </MenuBar>
      <Workspace>
        <LeftPane>
          <SearchRow>
            <ShrinkButton type="button">Shrink</ShrinkButton>
            <ComboSlot>
              <Combo $width={302} $height={30} $size={14}>
                <ComboInput aria-label="Model search" placeholder="Please input the model number or PCB" />
                <Chevron />
              </Combo>
            </ComboSlot>
            <SearchButton type="button" aria-label="Search models"><SearchGlyph color="#fff" /></SearchButton>
          </SearchRow>
          <Browser>
            <Rail>
              <RailGroup $tone="#2f97f7">
                <RailLegend>VIP</RailLegend>
                <RailItem type="button"><CourseIcon />Cour...</RailItem>
                <RailItem type="button" $active><PhoneIcon />Phone</RailItem>
                <RailItem type="button"><ComputerIcon />Com...</RailItem>
              </RailGroup>
              <RailGroup $tone="#6b7388">
                <RailLegend>Custom</RailLegend>
                <RailItem type="button"><DroneIcon />Drone</RailItem>
                <RailItem type="button"><GameIcon />Gam...</RailItem>
                <RailItem type="button"><CarIcon />Car</RailItem>
              </RailGroup>
              <RailItem type="button"><StarIcon />Favorites</RailItem>
            </Rail>
            <TreeArea>
              <Tree>
                {nodes.map((n) => (
                  <TreeRow key={n.label} $depth={n.depth ?? 0} $active={n.active}>
                    {n.kind === "pdf" ? <PdfIcon /> : n.kind === "pcb" ? <PcbIcon /> : <Expander open={n.kind === "open"} />}
                    <span>{n.label}</span>
                  </TreeRow>
                ))}
              </Tree>
            </TreeArea>
            <Scrollbar>
              <ScrollStep type="button" aria-label="Scroll up"><Icon w={10} h={6}><path d="m.500 5.500 4.500-5 4.500 5" /></Icon></ScrollStep>
              <ScrollTrack><ScrollThumb /></ScrollTrack>
              <ScrollStep type="button" aria-label="Scroll down"><Icon w={10} h={6}><path d="m.500.500 4.500 5 4.500-5" /></Icon></ScrollStep>
            </Scrollbar>
          </Browser>
        </LeftPane>
        <Splitter $shift={18} $tone="#fafffa"><Handle side="left" /></Splitter>
        <RightPane>
          <TabBar>
            <Tab type="button">
              <Icon w={18} h={20} color="#222"><path d="M1 10 9 2l8 8M3.500 8v10h11V8M7.500 18v-5h3v5" /></Icon>
              Member Center
            </Tab>
            <Tab type="button" $current><span>iPhone11Pro<u>P</u>roMAX tail plug board PCB layer 821-02260-05.pcb</span></Tab>
            <Spacer />
            <button type="button" aria-label="Close all tabs">
              <Icon w={19} h={18} color="#777" stroke={2}><path d="M1.500 15V3q0-2 2-2H15" /><rect x="5" y="4" width="14" height="14" rx="2" fill="#777" stroke="none" /><path d="m9.500 8.500 5 5M14.500 8.500l-5 5" stroke="#fff" strokeWidth="1.600" /></Icon>
            </button>
          </TabBar>
          <Viewer>
            <BoardColumn>
              <ToolBar>
                {toolGroups.map((group, gi) => (
                  <React.Fragment key={gi}>
                    {group.map(([name, on, glyph]) => <Tool key={name} type="button" aria-label={name} $on={on}>{glyph}</Tool>)}
                    <DividerBar />
                  </React.Fragment>
                ))}
                <Combo $width={214} $height={20} $size={12}>
                  <ComboInput aria-label="Component search" placeholder="Enter the component or net name" />
                  <Chevron />
                </Combo>
                <Tool type="button" aria-label="Search component"><SearchGlyph color="#222" size={18} /></Tool>
                <DividerBar />
                <SchemeButton type="button">[ColorScheme]</SchemeButton>
                <DividerBar />
                <Tool type="button" aria-label="Visibility">
                  <Icon w={18} h={18} color="#3f78dc" stroke={1.2}><path d="M1 9Q4.500 1.500 9 1.500T17 9Q13.500 16.500 9 16.500T1 9Z" /><circle cx="9" cy="9" r="5" /><circle cx="9" cy="9" r="2.300" /></Icon>
                </Tool>
                <DividerBar />
                <Spacer />
                <Tool type="button" aria-label="Side panel">
                  <Icon w={22} h={18} color="#777" stroke={1.6}><rect x="1" y="1" width="20" height="16" /><path d="M7.500 1v16M11 5h7M11 9h7M11 13h7" /></Icon>
                </Tool>
              </ToolBar>
              <Canvas>
                <BoardDrawing />
                <LayerPalette>
                  {layers.map(([name, fill]) => <LayerButton key={name} type="button" $fill={fill}>{name}</LayerButton>)}
                </LayerPalette>
              </Canvas>
            </BoardColumn>
            <Splitter $shift={30} $tone="#fafafa"><Handle side="right" /></Splitter>
          </Viewer>
        </RightPane>
      </Workspace>
      <StatusBar>XZZ Schematics <StatusLink href="https://www.xzztools.com">https://www.xzztools.com</StatusLink></StatusBar>
    </Page>
  );
}
